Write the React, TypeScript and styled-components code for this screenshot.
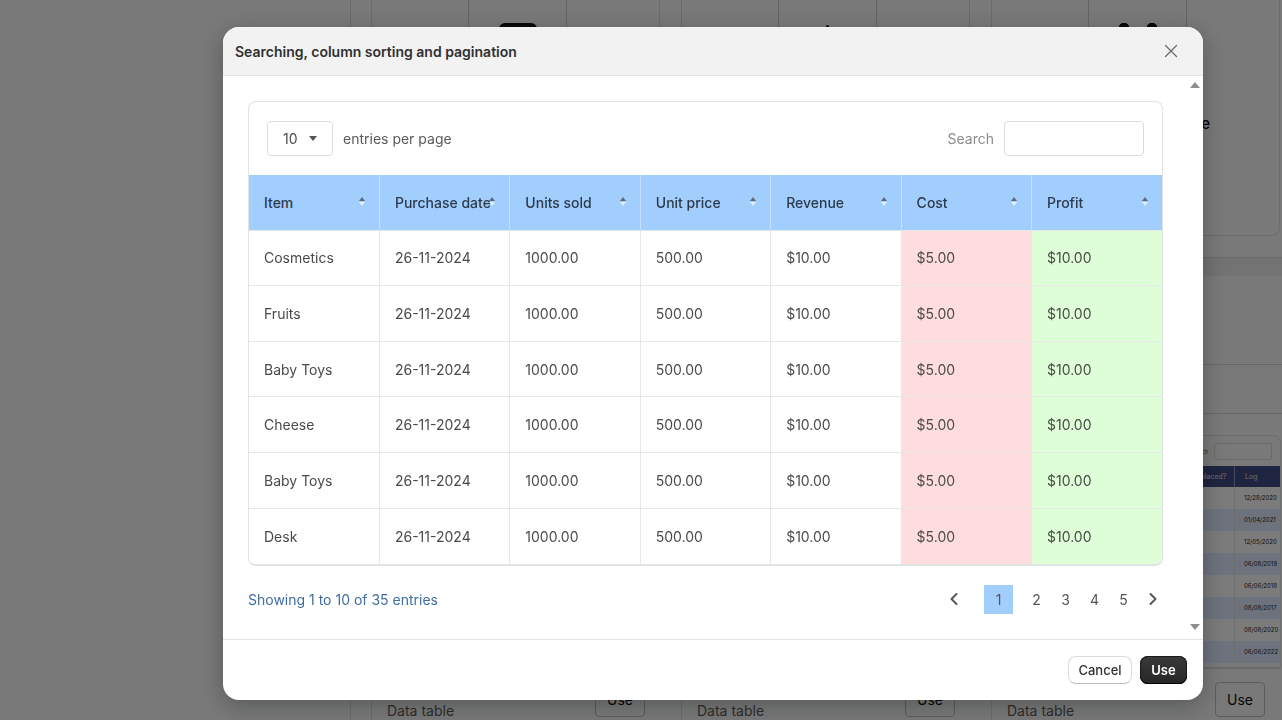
import React from 'react';
import styled, { createGlobalStyle } from 'styled-components';
import { ChevronLeft, ChevronRight, X } from 'lucide-react';

const COLUMNS = ['Item', 'Purchase date', 'Units sold', 'Unit price', 'Revenue', 'Cost', 'Profit'];
const ITEMS = ['Cosmetics', 'Fruits', 'Baby Toys', 'Cheese', 'Baby Toys', 'Desk'];
const LOG_DATES = [
  '12/28/2020',
  '01/04/2021',
  '12/05/2020',
  '06/08/2019',
  '06/06/2018',
  '08/08/2017',
  '08/08/2020',
  '06/06/2022',
];

const App: React.FC = () => (
  <>
    <GlobalStyle />
    <Page>
      <Sidebar />
      <Main>
        <CardRow>
          {[<RoundedBlock key="a" />, <Spike key="b" />, <TwoDots key="c" />].map((icon, i) => (
            <TopCard key={i}>
              <TopCells>
                <TopCell />
                <TopCell>{icon}</TopCell>
                <TopCell />
              </TopCells>
              <TopCardLabel>Data table</TopCardLabel>
            </TopCard>
          ))}
        </CardRow>
        <Band />
        <CardRow>
          {[0, 1, 2].map((i) => (
            <ExampleCard key={i}>
              <IntroBlock />
              <OptionBlock />
              <MiniCard>
                <MiniToolbar>
                  <MiniLabel>Search</MiniLabel>
                  <MiniInput />
                </MiniToolbar>
                <MiniHeader>
                  <MiniHeadCell />
                  <MiniHeadCell>Replaced?</MiniHeadCell>
                  <MiniHeadCell $log>Log</MiniHeadCell>
                </MiniHeader>
                {LOG_DATES.map((date, row) => (
                  <MiniRow key={row} $alt={row % 2 === 1}>
                    <MiniCell />
                    <MiniCell />
                    <MiniCell $log>{date}</MiniCell>
                  </MiniRow>
                ))}
              </MiniCard>
              <ExampleFooter>
                <ExampleName>Data table</ExampleName>
                <GhostButton>Use</GhostButton>
              </ExampleFooter>
            </ExampleCard>
          ))}
        </CardRow>
      </Main>
    </Page>

    <Overlay>
      <Modal>
        <ModalHeader>
          <ModalTitle>Searching, column sorting and pagination</ModalTitle>
          <CloseButton aria-label="Close">
            <X size={22} strokeWidth={1.4} />
          </CloseButton>
        </ModalHeader>

        <ModalBody>
          <ScrollContent>
            <TableCard>
              <Toolbar>
                <PerPage>
                  <PageSize>
                    10
                    <Caret />
                  </PageSize>
                  <PerPageLabel>entries per page</PerPageLabel>
                </PerPage>
                <SearchBox>
                  <SearchLabel>Search</SearchLabel>
                  <SearchInput />
                </SearchBox>
              </Toolbar>
              <Table>
                <thead>
                  <tr>
                    {COLUMNS.map((name) => (
                      <HeadCell key={name}>
                        {name}
                        <SortIcon>
                          <SortUp />
                          <SortDown />
                        </SortIcon>
                      </HeadCell>
                    ))}
                  </tr>
                </thead>
                <tbody>
                  {ITEMS.map((item, i) => (
                    <tr key={i}>
                      <Cell>{item}</Cell>
                      <Cell>26-11-2024</Cell>
                      <Cell>1000.00</Cell>
                      <Cell>500.00</Cell>
                      <Cell>$10.00</Cell>
                      <Cell $tone="cost">$5.00</Cell>
                      <Cell $tone="profit">$10.00</Cell>
                    </tr>
                  ))}
                </tbody>
              </Table>
            </TableCard>
            <TableFooter>
              <Showing>Showing 1 to 10 of 35 entries</Showing>
              <Pager>
                <PagerArrow $prev>
                  <ChevronLeft size={20} strokeWidth={2.4} />
                </PagerArrow>
                <PageNumber $active>1</PageNumber>
                <PageNumber>2</PageNumber>
                <PageNumber>3</PageNumber>
                <PageNumber>4</PageNumber>
                <PageNumber>5</PageNumber>
                <PagerArrow>
                  <ChevronRight size={20} strokeWidth={2.4} />
                </PagerArrow>
              </Pager>
            </TableFooter>
          </ScrollContent>
          <ScrollTrack>
            <ScrollArrowUp />
            <ScrollArrowDown />
          </ScrollTrack>
        </ModalBody>

        <ModalFooter>
          <CancelButton>Cancel</CancelButton>
          <UseButton>Use</UseButton>
        </ModalFooter>
      </Modal>
    </Overlay>
  </>
);

export default App;

const FONT = `Inter, 'Noto Sans', 'Liberation Sans', sans-serif`;

const GlobalStyle = createGlobalStyle`
  html, body {
    margin: 0;
    height: 100%;
    overflow: hidden;
    background: #f1f2f3;
    font-family: ${FONT};
  }

  * {
    box-sizing: border-box;
  }
`;

/* the page behind the dialog */

const Page = styled.div`
  display: flex;
  width: 1282px;
  height: 720px;
  overflow: hidden;
  background: #f2f3f4;
`;

const Sidebar = styled.div`
  flex: 0 0 351px;
  border-right: 1px solid #d6d6d6;
`;

const Main = styled.div`
  flex: 1;
  min-width: 0;
  display: flex;
  flex-direction: column;
`;

const CardRow = styled.div`
  display: grid;
  grid-template-columns: repeat(3, 289px);
  column-gap: 21px;
  margin-left: 20px;
`;

const TopCard = styled.div`
  height: 236px;
  border: 1px solid #d6d6d6;
  border-top: 0;
  border-radius: 0 0 8px 8px;
`;

const TopCells = styled.div`
  display: grid;
  grid-template-columns: 96px 98px 1fr;
  height: 100px;
`;

const TopCell = styled.div`
  display: flex;
  justify-content: center;
  padding-top: 23px;

  & + & {
    border-left: 1px solid #c9c9c9;
  }
`;

const RoundedBlock = styled.div`
  width: 38px;
  height: 24px;
  border-radius: 6px;
  background: #111;
`;

const Spike = styled.div`
  width: 3px;
  height: 16px;
  margin-top: 2px;
  border-radius: 2px 2px 0 0;
  background: #111;
`;

const TwoDots = styled.div`
  width: 38px;
  height: 20px;
  background:
    radial-gradient(circle at 5px 5px, #111 5px, transparent 5.5px),
    radial-gradient(circle at 33px 5px, #111 5px, transparent 5.5px);
`;

const TopCardLabel = styled.div`
  padding: 14px 69px 0 0;
  font-size: 15px;
  font-weight: 500;
  line-height: 20px;
  text-align: right;
  color: #000;
`;

const Band = styled.div`
  height: 19px;
  margin-top: 21px;
  border-top: 1px solid #d2d2d2;
  background: #e6e6e6;
`;

const ExampleCard = styled.div`
  display: flex;
  flex-direction: column;
  width: 290px;
`;

const IntroBlock = styled.div`
  width: 310px;
  height: 89px;
  border-bottom: 1px solid #cfcfcf;
`;

const OptionBlock = styled.div`
  width: 310px;
  height: 49px;
  border-bottom: 1px solid #cfcfcf;
`;

const MiniCard = styled.div`
  height: 233px;
  margin-top: 21px;
  border: 1px solid #d8d8d8;
  border-radius: 8px 8px 0 0;
  overflow: hidden;
`;

const MiniToolbar = styled.div`
  display: flex;
  justify-content: flex-end;
  align-items: center;
  gap: 6px;
  height: 30px;
  padding-right: 8px;
`;

const MiniLabel = styled.span`
  font-size: 6px;
  color: #555;
`;

const MiniInput = styled.div`
  width: 58px;
  height: 17px;
  border: 1px solid #d5d5d5;
  border-radius: 2px;
`;

const MiniHeader = styled.div`
  display: grid;
  grid-template-columns: 1fr 46px 46px;
  height: 21px;
  background: #3f4a80;
`;

const MiniHeadCell = styled.div<{ $log?: boolean }>`
  padding-left: ${({ $log }) => ($log ? '10px' : '4px')};
  border-left: ${({ $log }) => ($log ? '1px solid #8a93b8' : '0')};
  font-size: 7px;
  line-height: 21px;
  color: #d6d9e4;
`;

const MiniRow = styled.div<{ $alt: boolean }>`
  display: grid;
  grid-template-columns: 1fr 46px 46px;
  height: 22px;
  background: ${({ $alt }) => ($alt ? '#dbe5fb' : '#f6f6f6')};
`;

const MiniCell = styled.div<{ $log?: boolean }>`
  padding-left: ${({ $log }) => ($log ? '9px' : '4px')};
  border-left: ${({ $log }) => ($log ? '1px solid #dcdcdc' : '0')};
  font-size: 6px;
  line-height: 22px;
  color: #222;
`;

const ExampleFooter = styled.div`
  display: flex;
  justify-content: space-between;
  align-items: flex-end;
  height: 52px;
  padding: 0 16px 0 15px;
  border-left: 1px solid #d6d6d6;
  border-top: 1px solid #d6d6d6;
`;

const ExampleName = styled.span`
  margin-bottom: 0;
  font-size: 14px;
  line-height: 18px;
  color: #5a5a5a;
  position: relative;
  top: 0;
`;

const GhostButton = styled.div`
  display: flex;
  align-items: center;
  justify-content: center;
  width: 50px;
  height: 35px;
  margin-bottom: 3px;
  border: 1px solid #b9b9b9;
  border-radius: 4px;
  font-size: 14px;
  color: #111;
`;

/* the dialog */

const Overlay = styled.div`
  position: fixed;
  inset: 0;
  padding: 27px 0 0 223px;
  background: rgba(0, 0, 0, 0.5);
`;

const Modal = styled.div`
  display: flex;
  flex-direction: column;
  width: 980px;
  height: 673px;
  border-radius: 16px;
  overflow: hidden;
  background: #fff;
  box-shadow: 0 6px 24px rgba(0, 0, 0, 0.28);
`;

const ModalHeader = styled.div`
  display: flex;
  align-items: center;
  justify-content: space-between;
  flex: 0 0 49px;
  padding: 0 21px 0 12px;
  border-bottom: 1px solid #e3e3e3;
  background: #f2f2f2;
`;

const ModalTitle = styled.div`
  font-size: 14px;
  font-weight: 600;
  color: #303030;
`;

const CloseButton = styled.div`
  display: flex;
  color: #6b6b6b;
`;

const ModalBody = styled.div`
  flex: 1;
  min-height: 0;
  display: flex;
`;

const ScrollContent = styled.div`
  flex: 1;
  min-width: 0;
  padding: 25px 25px 0;
`;

const ScrollTrack = styled.div`
  flex: 0 0 15px;
  display: flex;
  flex-direction: column;
  justify-content: space-between;
  align-items: flex-start;
  padding: 6px 0 9px 2px;
`;

const ScrollArrowUp = styled.div`
  width: 0;
  height: 0;
  border-left: 5px solid transparent;
  border-right: 5px solid transparent;
  border-bottom: 6px solid #8f8f8f;
`;

const ScrollArrowDown = styled(ScrollArrowUp)`
  border-bottom: 0;
  border-top: 6px solid #8f8f8f;
`;

const TableCard = styled.div`
  border: 1px solid #e3e3e3;
  border-bottom: 2px solid #dfe3e3;
  border-radius: 8px;
  overflow: hidden;
`;

const Toolbar = styled.div`
  display: flex;
  align-items: center;
  justify-content: space-between;
  height: 73px;
  padding: 0 18px;
`;

const PerPage = styled.div`
  display: flex;
  align-items: center;
  gap: 10px;
`;

const PageSize = styled.div`
  display: flex;
  align-items: center;
  justify-content: space-between;
  width: 66px;
  height: 35px;
  padding: 0 15px;
  border: 1px solid #dadde0;
  border-radius: 4px;
  font-size: 14px;
  color: #4a4a4a;
`;

const Caret = styled.span`
  width: 0;
  height: 0;
  border-left: 4px solid transparent;
  border-right: 4px solid transparent;
  border-top: 5px solid #555;
`;

const PerPageLabel = styled.span`
  font-size: 14px;
  color: #5a5a5a;
`;

const SearchBox = styled.div`
  display: flex;
  align-items: center;
  gap: 10px;
`;

const SearchLabel = styled.span`
  font-size: 14px;
  color: #8c8c8c;
`;

const SearchInput = styled.div`
  width: 140px;
  height: 35px;
  border: 1px solid #dadde0;
  border-radius: 4px;
  background: #fff;
`;

const Table = styled.table`
  width: 100%;
  table-layout: fixed;
  border-collapse: collapse;
`;

const HeadCell = styled.th`
  position: relative;
  height: 55px;
  padding: 0 15px;
  border-left: 1px solid #c4dffd;
  background: #a2cefe;
  font-size: 14px;
  font-weight: 500;
  text-align: left;
  white-space: nowrap;
  color: #2c3a4b;

  &:first-child {
    border-left: 0;
  }
`;

const SortIcon = styled.span`
  position: absolute;
  top: 22px;
  right: 14px;
  display: flex;
  flex-direction: column;
  gap: 1px;
`;

const SortUp = styled.span`
  width: 0;
  height: 0;
  border-left: 3.5px solid transparent;
  border-right: 3.5px solid transparent;
  border-bottom: 4px solid #5f6b78;
`;

const SortDown = styled.span`
  width: 0;
  height: 0;
  border-left: 3.5px solid transparent;
  border-right: 3.5px solid transparent;
  border-top: 4px solid #e4effb;
`;

const TONES = {
  cost: '#ffdcde',
  profit: '#defed8',
};

const Cell = styled.td<{ $tone?: keyof typeof TONES }>`
  height: 55.67px;
  padding: 0 15px;
  border-left: 1px solid #e7e7e7;
  border-top: 1px solid #e7e7e7;
  background: ${({ $tone }) => ($tone ? TONES[$tone] : '#fff')};
  font-size: 14px;
  color: #4a4a4a;

  &:first-child {
    border-left: 0;
  }
`;

const TableFooter = styled.div`
  display: flex;
  align-items: center;
  justify-content: space-between;
  margin-top: 19px;
`;

const Showing = styled.span`
  font-size: 14px;
  color: #3f6d9f;
`;

const Pager = styled.div`
  display: flex;
  align-items: center;
`;

const PagerArrow = styled.div<{ $prev?: boolean }>`
  display: flex;
  justify-content: center;
  width: 20px;
  margin-right: ${({ $prev }) => ($prev ? '20px' : '0')};
  margin-left: ${({ $prev }) => ($prev ? '0' : '5px')};
  color: #555;
`;

const PageNumber = styled.div<{ $active?: boolean }>`
  display: flex;
  align-items: center;
  justify-content: center;
  width: 29px;
  height: 29px;
  margin-right: ${({ $active }) => ($active ? '9px' : '0')};
  background: ${({ $active }) => ($active ? '#a2cefe' : 'transparent')};
  font-size: 14px;
  color: #555;
`;

const ModalFooter = styled.div`
  display: flex;
  align-items: center;
  justify-content: flex-end;
  gap: 8px;
  flex: 0 0 61px;
  padding-right: 16px;
  border-top: 1px solid #e3e3e3;
`;

const CancelButton = styled.div`
  display: flex;
  align-items: center;
  justify-content: center;
  width: 64px;
  height: 28px;
  border: 1px solid #dcdcdc;
  border-bottom-color: #bdbdbd;
  border-radius: 8px;
  background: #fff;
  font-size: 13px;
  font-weight: 500;
  color: #303030;
`;

const UseButton = styled.div`
  display: flex;
  align-items: center;
  justify-content: center;
  width: 47px;
  height: 28px;
  border-radius: 8px;
  background: linear-gradient(#3a3a3a, #262626);
  box-shadow: inset 0 -1px 0 #000, 0 0 0 1px #1a1a1a inset;
  font-size: 13px;
  font-weight: 600;
  color: #fff;
`;
